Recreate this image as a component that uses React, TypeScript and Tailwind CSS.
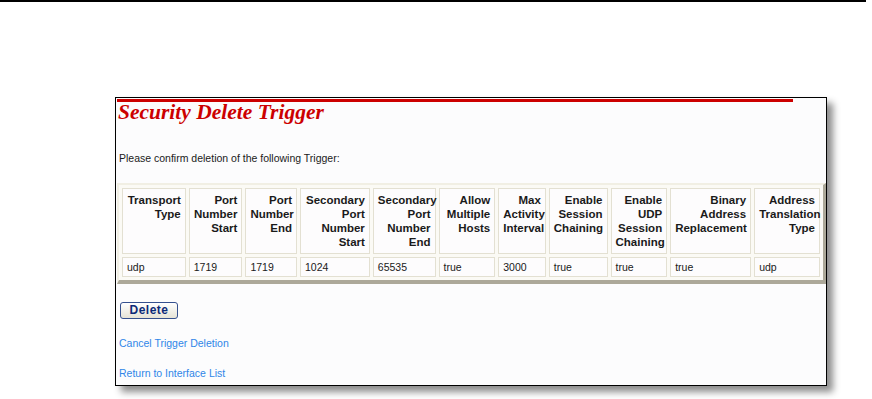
import React from "react"

const headers = [
  { lines: ["Transport", "Type"], w: "w-[63px]" },
  { lines: ["Port", "Number", "Start"], w: "w-[53px]" },
  { lines: ["Port", "Number", "End"], w: "w-[51px]" },
  { lines: ["Secondary", "Port", "Number", "Start"], w: "w-[69px]" },
  { lines: ["Secondary", "Port", "Number", "End"], w: "w-[62px]" },
  { lines: ["Allow", "Multiple", "Hosts"], w: "w-[56px]" },
  { lines: ["Max", "Activity", "Interval"], w: "w-[47px]" },
  { lines: ["Enable", "Session", "Chaining"], w: "w-[58px]" },
  { lines: ["Enable", "UDP", "Session", "Chaining"], w: "w-[56px]" },
  { lines: ["Binary", "Address", "Replacement"], w: "w-[80px]" },
  { lines: ["Address", "Translation", "Type"], w: "w-[65px]" },
]

const values = ["udp", "1719", "1719", "1024", "65535", "true", "3000", "true", "true", "true", "udp"]

export default function App() {
  return (
    <div className="min-h-[399px] w-[872px] bg-white font-['Liberation_Sans',Arial,sans-serif] text-[#1a1a1a]">
      {/* rule across the top of the page */}
      <div className="h-[2px] w-[866px] bg-black" />

      <div className="ml-[115px] mt-[95px] w-[712px] border border-black bg-[#fcfcfd] pb-[5px] shadow-[6px_6px_7px_rgba(0,0,0,0.45)]">
        <div className="ml-[1px] mt-[1px] h-[3px] w-[676px] bg-[#cc0000]" />

        <h1 className="pl-[2px] font-['Liberation_Serif',serif] text-[21.5px] font-bold italic leading-[20px] text-[#cc0000]">
          Security Delete Trigger
        </h1>

        <p className="mt-[29px] pl-[3px] text-[10.5px] leading-[14px]">
          Please confirm deletion of the following Trigger:
        </p>

        <table className="ml-[1px] mt-[18px] w-[709px] table-fixed border-separate border-spacing-[3px] border-[2px] border-b-[4px] border-r-[3px] border-t-[#f1efe4] border-l-[#f1efe4] border-b-[#aca899] border-r-[#aca899] bg-[#fbfaf5]">
          <thead>
            <tr>
              {headers.map((h, i) => (
                <th
                  key={i}
                  className={`${h.w} border border-[#e3e0d2] bg-[#fdfcfd] px-[4px] pt-[4px] pb-[4px] align-top text-right text-[11.5px] font-bold leading-[14px]`}
                >
                  {h.lines.map((l, j) => (
                    <div key={j}>{l}</div>
                  ))}
                </th>
              ))}
            </tr>
          </thead>
          <tbody>
            <tr>
              {values.map((v, i) => (
                <td
                  key={i}
                  className="border border-[#e3e0d2] bg-[#fdfcfd] px-[4px] pt-[3px] pb-[2px] text-left text-[10.5px] leading-[13px]"
                >
                  {v}
                </td>
              ))}
            </tr>
          </tbody>
        </table>

        <button
          type="button"
          className="ml-[4px] mt-[18px] h-[17px] w-[58px] rounded-[3px] border border-[#35508e] bg-gradient-to-b from-white to-[#e6e3d6] text-[12px] font-bold leading-[15px] tracking-[0.5px] text-[#0c2a78]"
        >
          Delete
        </button>

        <div className="mt-[15px] pl-[3px] text-[10.5px] leading-[14px] text-[#2f86e8]">
          <a href="#">Cancel Trigger Deletion</a>
        </div>
        <div className="mt-[16px] pl-[3px] text-[10.5px] leading-[14px] text-[#2f86e8]">
          <a href="#">Return to Interface List</a>
        </div>
      </div>
    </div>
  )
}
